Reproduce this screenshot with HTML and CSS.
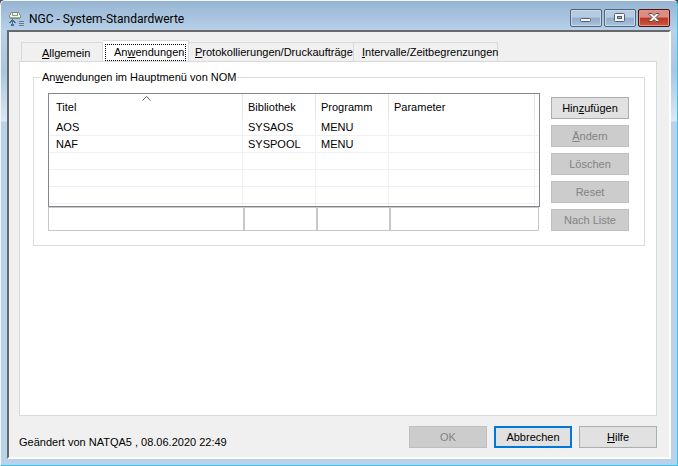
FILE: index.html
```html
<!DOCTYPE html>
<html lang="de">
<head>
<meta charset="utf-8">
<title>NGC - System-Standardwerte</title>
<link rel="stylesheet" href="styles.css">
</head>
<body>
<div class="window">
  <header class="titlebar">
    <svg class="app-icon" width="16" height="16" viewBox="0 0 16 16" shape-rendering="crispEdges" aria-hidden="true">
      <path fill="#7c8c80" d="M3 1h8v1H3zM2 2h1v2H2zM11 2h1v2h-1zM1 4h1v3H1zM12 4h1v3h-1zM2 7h10v1H2z"/>
      <path fill="#f4f4e8" d="M3 2h8v2H3zM2 4h10v2H2z"/>
      <path fill="#8c9890" d="M4 2h1v2H4zM9 2h1v2H9zM4 4h6v1H4z"/>
      <path fill="#8fbf8a" d="M2 6h10v1H2z"/>
      <path fill="#4c6c94" d="M4 8h1v7H4zM3 9h3v1H3zM2 10h5v1H2zM1 11h2v1H1zM6 11h2v1H6zM3 13h1v2H3zM5 13h1v2H5z"/>
      <path fill="#687c94" d="M11 10h5v1h-5zM11 12h5v1h-5zM11 14h5v1h-5z"/>
    </svg>
    <h1 class="title">NGC - System-Standardwerte</h1>
    <div class="controls">
      <button class="control" type="button" aria-label="Minimieren">
        <svg width="28" height="14" viewBox="0 0 28 14"><rect x="8.500" y="7.500" width="10" height="3" rx="1" fill="#f6f6f6" stroke="#555e6b"/></svg>
      </button>
      <button class="control" type="button" aria-label="Maximieren">
        <svg width="28" height="14" viewBox="0 0 28 14"><rect x="8.500" y="2.500" width="10" height="8" rx="1" fill="#f6f6f6" stroke="#555e6b"/><rect x="11.500" y="5.500" width="4" height="2" fill="#8fb0d0" stroke="#555e6b"/></svg>
      </button>
      <button class="control control-close" type="button" aria-label="Schließen">
        <svg width="28" height="14" viewBox="0 0 28 14"><path d="M9 2.500h3l2 2 2-2h3v1l-3 3 3 3v1h-3l-2-2-2 2H9v-1l3-3-3-3z" fill="#f6f6f6" stroke="#5a4650"/></svg>
      </button>
    </div>
  </header>

  <main class="client">
    <div class="tabs" role="tablist">
      <button class="tab tab-allgemein" type="button" role="tab"><u>A</u>llgemein</button>
      <button class="tab tab-anwendungen" type="button" role="tab" aria-selected="true"><span class="focus">An<u>w</u>endungen</span></button>
      <button class="tab tab-protokoll" type="button" role="tab"><u>P</u>rotokollierungen/Druckaufträge</button>
      <button class="tab tab-intervalle" type="button" role="tab"><u>I</u>ntervalle/Zeitbegrenzungen</button>
    </div>
    <section class="panel" role="tabpanel">
      <fieldset class="group">
        <legend>An<u>w</u>endungen im Hauptmenü von NOM</legend>
        <div class="group-body">
          <div class="editor">
            <div class="list">
              <table>
                <colgroup><col class="c-title"><col class="c-lib"><col class="c-prog"><col><col class="c-end"></colgroup>
                <thead>
                  <tr>
                    <th scope="col">Titel<svg class="sort" width="9" height="5" viewBox="0 0 9 5"><path d="M.5 4.500l4-4 4 4" fill="none" stroke="#606060"/></svg></th>
                    <th scope="col">Bibliothek</th><th scope="col">Programm</th><th scope="col">Parameter</th><td></td>
                  </tr>
                </thead>
                <tbody>
                  <tr><td>AOS</td><td>SYSAOS</td><td>MENU</td><td></td><td></td></tr>
                  <tr><td>NAF</td><td>SYSPOOL</td><td>MENU</td><td></td><td></td></tr>
                  <tr><td></td><td></td><td></td><td></td><td></td></tr>
                  <tr><td></td><td></td><td></td><td></td><td></td></tr>
                  <tr><td></td><td></td><td></td><td></td><td></td></tr>
                  <tr class="rest"><td></td><td></td><td></td><td></td><td></td></tr>
                </tbody>
              </table>
            </div>
            <div class="fields">
              <input type="text" aria-label="Titel">
              <input type="text" aria-label="Bibliothek">
              <input type="text" aria-label="Programm">
              <input type="text" aria-label="Parameter">
            </div>
          </div>
          <div class="actions">
            <button class="btn" type="button">Hin<u>z</u>ufügen</button>
            <button class="btn" type="button" disabled><u>Ä</u>ndern</button>
            <button class="btn" type="button" disabled>Löschen</button>
            <button class="btn" type="button" disabled>Reset</button>
            <button class="btn" type="button" disabled>Nach Liste</button>
          </div>
        </div>
      </fieldset>
    </section>
    <footer class="footer">
      <p class="status">Geändert von NATQA5 , 08.06.2020 22:49</p>
      <button class="btn" type="button" disabled>OK</button>
      <button class="btn btn-default" type="button">Abbrechen</button>
      <button class="btn" type="button"><u>H</u>ilfe</button>
    </footer>
  </main>
</div>
</body>
</html>
```
FILE: styles.css
```css
* { box-sizing: border-box; }

body {
  margin: 0;
  background: #4a5258;
  color: #000;
  font: 11px/16px "Liberation Sans", Arial, sans-serif;
}

button, input { font: inherit; color: inherit; margin: 0; }

u { text-underline-offset: 1px; text-decoration-thickness: 1px; }

.window {
  display: flex;
  flex-direction: column;
  min-height: 100vh;
  padding: 0 6px 6px;
  border: 1px solid #35c5e4;
  border-top-color: #f4f8fb;
  border-left-color: #f4f8fb;
  border-radius: 5px 5px 0 0;
  background: linear-gradient(#96b4d2 0, #b9d1ea 30px, #a9c6e4 70px, #dce8f5 120px, #b9d1ea 121px);
}

.titlebar {
  display: flex;
  align-items: center;
  height: 29px;
  padding: 0 1px;
}

.app-icon { margin-top: 6px; }

.title {
  flex: 1;
  margin: 6px 0 0 5px;
  font: 12px/16px Roboto, "Noto Sans", sans-serif;
}

.controls { display: flex; gap: 2px; margin-top: 4px; }

.control {
  width: 32px;
  height: 18px;
  padding: 1px;
  border: 1px solid #51637b;
  border-radius: 2px;
  background: linear-gradient(#b5cbe1 45%, #91adcb 50%, #a9c3dd);
  box-shadow: inset 0 0 0 1px #c6d8ea;
}

.control svg { display: block; }

.control-close {
  border-color: #4c1019;
  background: linear-gradient(#dd8c80 45%, #bd3522 50%, #cc5a3c);
  box-shadow: inset 0 0 0 1px #e0978a;
}

.client {
  flex: 1;
  display: flex;
  flex-direction: column;
  border: 2px solid #fff;
  border-color: #696969 #fff #fff #696969;
  background: #f0f0f0;
  padding: 8px 12px 7px 10px;
}

.tabs { display: flex; align-items: flex-end; padding-left: 2px; }

.tab {
  height: 19px;
  padding: 0;
  border: 1px solid #d9d9d9;
  border-bottom: 0;
  background: #f0f0f0;
  white-space: nowrap;
}

.tab + .tab { border-left: 0; }
.tab-allgemein { width: 82px; padding: 1px 0 0 20px; text-align: left; }
.tab-anwendungen {
  width: 86px;
  height: 22px;
  margin-bottom: -1px;
  padding: 2px 2px 0;
  background: #fff;
}
.focus {
  display: block;
  height: 17px;
  padding-left: 8px;
  border: 1px dotted #000;
  line-height: 14px;
  text-align: left;
}
.tab-protokoll { width: 165px; padding-left: 6px; text-align: left; }
.tab-intervalle { width: 144px; padding-left: 8px; text-align: left; }

.panel {
  flex: 1;
  padding: 8px 11px 0 13px;
  border: 1px solid #d9d9d9;
  background: #fff;
}

.group {
  min-width: 0;
  margin: 0;
  padding: 0 15px 14px 14px;
  border: 1px solid #dcdcdc;
}

.group legend { margin-left: -7px; padding: 0 1px; line-height: 14px; }

.group-body { display: flex; gap: 11px; padding-top: 9px; }
.editor { flex: 1; min-width: 0; }

.list { border: 1px solid #828790; }
.list table { width: 100%; border-collapse: separate; border-spacing: 0; table-layout: fixed; }
.c-title { width: 194px; }
.c-lib, .c-prog { width: 73px; }
.c-end { width: 4px; }

.list th, .list td { height: 17px; padding: 0; border-bottom: 1px solid #f0f0f0; }
.list th, .list td:not(:last-child) { padding-left: 5px; border-right: 1px solid #f0f0f0; text-align: left; }
.list tr > :first-child { padding-left: 7px; }
.list th { position: relative; border-right-color: #e5e5e5; font-weight: normal; }
.list thead th, .list thead td { height: 25px; border-bottom: 0; }
.list .rest td { height: 2px; border-bottom: 0; }
.list tbody td { line-height: 14px; }
.sort { position: absolute; top: 2px; left: 48%; }

.fields { display: grid; grid-template-columns: 196px 73px 73px 1fr; padding-right: 1px; }
.fields input {
  min-width: 0;
  height: 24px;
  border: 1px solid #c8c8c8;
  background: #fff;
}

.actions { display: flex; flex-direction: column; gap: 6px; padding-top: 4px; }

.btn {
  width: 78px;
  height: 22px;
  padding: 0;
  border: 1px solid #adadad;
  background: #e1e1e1;
}
.btn:disabled { border-color: #bfbfbf; background: #ccc; color: #838383; }
.btn-default { border: 2px solid #0078d7; }

.footer { display: flex; align-items: flex-start; gap: 7px; padding-top: 10px; }
.status { flex: 1; margin: 8px 0 0; }
```
